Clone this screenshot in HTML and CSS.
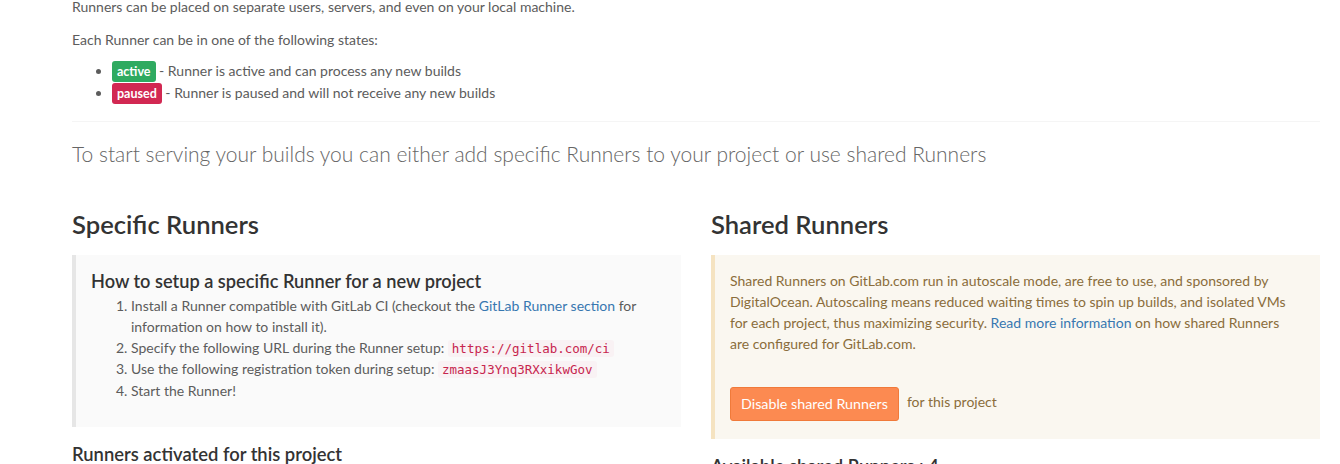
FILE: index.html
```html
<!DOCTYPE html>
<html>
<head>
<meta charset="utf-8">
<link rel="stylesheet" href="styles.css">
</head>
<body>
<div class="content">
  <p class="intro">Runners can be placed on separate users, servers, and even on your local machine.</p>
  <p>Each Runner can be in one of the following states:</p>
  <ul class="states">
    <li><span class="label label-success">active</span> - Runner is active and can process any new builds</li>
    <li><span class="label label-danger">paused</span> - Runner is paused and will not receive any new builds</li>
  </ul>
  <hr>
  <p class="lead">To start serving your builds you can either add specific Runners to your project or use shared Runners</p>
  <div class="row">
    <div class="col">
      <h3>Specific Runners</h3>
      <div class="callout callout-gray">
        <h4>How to setup a specific Runner for a new project</h4>
        <ol>
          <li>Install a Runner compatible with GitLab CI (checkout the <a href="#">GitLab Runner section</a> for information on how to install it).</li>
          <li>Specify the following URL during the Runner setup: <code>https://gitlab.com/ci</code></li>
          <li>Use the following registration token during setup: <code>zmaasJ3Ynq3RXxikwGov</code></li>
          <li>Start the Runner!</li>
        </ol>
      </div>
      <h4 class="sub">Runners activated for this project</h4>
    </div>
    <div class="col">
      <h3>Shared Runners</h3>
      <div class="callout callout-warning">
        <p>Shared Runners on GitLab.com run in autoscale mode, are free to use, and sponsored by DigitalOcean. Autoscaling means reduced waiting times to spin up builds, and isolated VMs for each project, thus maximizing security. <a href="#">Read more information</a> on how shared Runners are configured for GitLab.com.</p>
        <div class="actions"><button class="btn-warning">Disable shared Runners</button><span>for this project</span></div>
      </div>
      <h4 class="sub">Available shared Runners : 4</h4>
    </div>
  </div>
</div>
</body>
</html>
```
FILE: styles.css
```css
html, body { margin: 0; padding: 0; background: #fff; }
body {
  font-family: "Lato", "Liberation Sans", sans-serif;
  font-size: 14px;
  line-height: 1.5;
  color: #5c5c5c;
  overflow: hidden;
}
.content { width: 1248px; margin-left: 72px; margin-top: -4px; }
p { margin: 0 0 12px; }
a { color: #3777b0; text-decoration: none; }
.states { margin: -2px 0 0; padding-left: 40px; list-style: disc; }
.states li { line-height: 22px; }
.label {
  display: inline;
  font-size: 12.5px;
  font-weight: 700;
  color: #fff;
  line-height: 1;
  padding: 3px 5px 3px;
  border-radius: 3px;
}
.label-success { background: #2faa60; }
.label-danger { background: #d22852; }
hr { border: 0; border-top: 1px solid #f5f5f5; margin: 17px 0 17px; }
.lead { font-size: 21px; font-weight: 300; line-height: 1.4; margin: 0 0 20px; color: #666; }
.row { display: flex; gap: 30px; margin-top: 42px; }
.col { flex: 1; min-width: 0; }
h3 { font-size: 25.6px; font-weight: 600; color: #333; margin: 0 0 16px; line-height: 1.1; }
h4 { font-size: 18.2px; font-weight: 600; color: #333; margin: 0; line-height: 1.1; }
.callout { border-left: 4px solid; }
.callout-gray { background: #fafafa; border-left-color: #e6e6e6; padding: 16px 20px 26px 15px; }
.callout-gray h4 { margin: 0 0 4px; }
.callout-gray ol { margin: 0; padding-left: 40px; }
.callout-warning { background: #faf7f0; border-left-color: #f5e3c1; color: #8a6d3b; padding: 15px 20px 18px 15px; }
.callout-warning p { margin: 0 0 33px; }
code {
  font-family: "DejaVu Sans Mono", "Liberation Mono", monospace;
  font-size: 12.5px;
  color: #c7254e;
  background: #f9f2f4;
  padding: 1px 4px;
  border-radius: 3px;
}
.actions { display: flex; align-items: center; gap: 8px; }
.actions span { margin-top: -4px; }
.btn-warning {
  font-family: inherit;
  font-size: 14.3px;
  color: #fff;
  background: #fc8a51;
  border: 1px solid #f07a3a;
  border-radius: 3px;
  padding: 6px 10px;
  line-height: 20px;
}
.sub { margin-top: 17px; font-size: 18.4px; }
```
